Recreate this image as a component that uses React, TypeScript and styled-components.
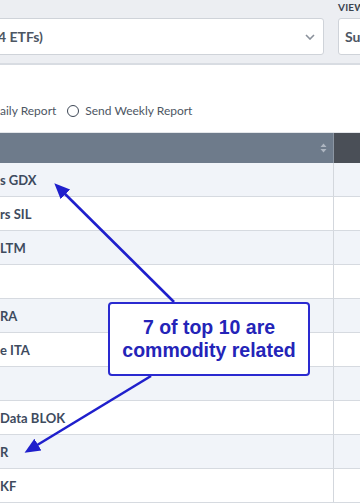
import * as React from 'react';
import styled, { createGlobalStyle } from 'styled-components';

const GlobalStyle = createGlobalStyle`
  body {
    margin: 0;
    font-family: Lato, "Open Sans", sans-serif;
  }
`;

const rows = ['s GDX', 'rs SIL', 'LTM', '', 'RA', 'e ITA', '', 'Data BLOK', 'R', 'KF'];

export default function App() {
  return (
    <Page>
      <GlobalStyle />
      <FilterBar>
        <Select $width={334} $shift={-10}>
          <SelectText>4 ETFs)</SelectText>
          <Chevron width="10" height="6" viewBox="0 0 10 6">
            <path d="M1 1l4 4 4-4" fill="none" stroke="#8a919b" strokeWidth="1.6" />
          </Chevron>
        </Select>
        <ViewGroup>
          <Label>VIEW</Label>
          <Select $width={60} $shift={0}>
            <SelectText $indent={6}>Summary</SelectText>
          </Select>
        </ViewGroup>
      </FilterBar>

      <RadioRow>
        <RadioText>aily Report</RadioText>
        <Radio />
        <RadioText>Send Weekly Report</RadioText>
      </RadioRow>

      <Table>
        <HeaderCell>
          <SortIcon width="7" height="10" viewBox="0 0 7 10">
            <path d="M3.5 0.5L6.5 4H0.5z M3.5 9.5L0.5 6H6.5z" fill="#aeb6c1" />
          </SortIcon>
        </HeaderCell>
        <HeaderCell $dark />
        {rows.map((name, i) => (
          <React.Fragment key={i}>
            <Cell $alt={i % 2 === 0}>{name}</Cell>
            <Cell $alt={i % 2 === 0} />
          </React.Fragment>
        ))}
      </Table>

      <Arrows width="360" height="504" viewBox="0 0 360 504">
        <defs>
          <marker id="head" markerWidth="6" markerHeight="6" refX="4" refY="3" orient="auto" markerUnits="strokeWidth">
            <path d="M0 0.4L6 3L0 5.6z" fill="#1f1fcc" />
          </marker>
        </defs>
        <line x1="174" y1="302" x2="58" y2="187" stroke="#1f1fcc" strokeWidth="2.6" markerEnd="url(#head)" />
        <line x1="151" y1="376" x2="29" y2="450" stroke="#1f1fcc" strokeWidth="2.6" markerEnd="url(#head)" />
      </Arrows>

      <Callout>
        7 of top 10 are
        <br />
        commodity related
      </Callout>
    </Page>
  );
}

const Page = styled.div`
  position: relative;
  width: 360px;
  height: 504px;
  overflow: hidden;
  background: #ffffff;
`;

const FilterBar = styled.div`
  display: flex;
  align-items: flex-end;
  height: 65px;
  box-sizing: border-box;
  padding-bottom: 8px;
  background: #eceef2;
  border-bottom: 2px solid #d8dce2;
`;

const Select = styled.div<{ $width: number; $shift: number }>`
  display: flex;
  align-items: center;
  flex-shrink: 0;
  width: ${({ $width }) => $width}px;
  margin-left: ${({ $shift }) => $shift}px;
  height: 37px;
  box-sizing: border-box;
  background: #ffffff;
  border: 1px solid #cfd3d9;
  border-radius: 3px;
`;

const SelectText = styled.span<{ $indent?: number }>`
  flex: 1;
  padding-left: ${({ $indent }) => $indent ?? 7}px;
  font-size: 14px;
  font-weight: 700;
  color: #4d5663;
  white-space: nowrap;
  overflow: hidden;
`;

const Chevron = styled.svg`
  margin-right: 8px;
`;

const ViewGroup = styled.div`
  display: flex;
  flex-direction: column;
  margin-left: 14px;
`;

const Label = styled.div`
  font-size: 10px;
  font-weight: 700;
  color: #3b4450;
  letter-spacing: 0.2px;
  margin-bottom: 5px;
`;

const RadioRow = styled.div`
  display: flex;
  align-items: center;
  height: 67px;
  box-sizing: border-box;
  padding-top: 24px;
`;

const RadioText = styled.span`
  font-size: 12px;
  color: #4d5663;
  white-space: nowrap;
`;

const Radio = styled.span`
  width: 10px;
  height: 10px;
  margin: 0 6px 0 11px;
  border: 1.5px solid #3d4755;
  border-radius: 50%;
  flex-shrink: 0;
`;

const Table = styled.div`
  display: grid;
  grid-template-columns: 333px 1fr;
  border-top: 1px solid #e3e6ea;
`;

const HeaderCell = styled.div<{ $dark?: boolean }>`
  display: flex;
  align-items: center;
  justify-content: flex-end;
  height: 30px;
  padding-right: 6px;
  background: ${({ $dark }) => ($dark ? '#4a4f57' : '#6e7b8b')};
  border-left: ${({ $dark }) => ($dark ? '1px solid #8c96a3' : 'none')};
`;

const SortIcon = styled.svg`
  display: block;
`;

const Cell = styled.div<{ $alt: boolean }>`
  display: flex;
  align-items: center;
  height: 34px;
  box-sizing: border-box;
  border-bottom: 1px solid #d6dae0;
  background: ${({ $alt }) => ($alt ? '#f1f4f9' : '#ffffff')};
  font-size: 13px;
  font-weight: 700;
  color: #3e4b5e;
  white-space: nowrap;
  &:nth-child(even) {
    border-left: 1px solid #d3d7dd;
  }
`;

const Arrows = styled.svg`
  position: absolute;
  left: 0;
  top: 0;
  pointer-events: none;
`;

const Callout = styled.div`
  position: absolute;
  left: 108px;
  top: 302px;
  width: 202px;
  height: 74px;
  box-sizing: border-box;
  display: flex;
  flex-direction: column;
  align-items: center;
  justify-content: center;
  background: #ffffff;
  border: 2px solid #2a2ad0;
  border-radius: 4px;
  font-family: "Liberation Sans", Arial, sans-serif;
  font-size: 19.5px;
  font-weight: 700;
  line-height: 23px;
  color: #2424b8;
  text-align: center;
`;
